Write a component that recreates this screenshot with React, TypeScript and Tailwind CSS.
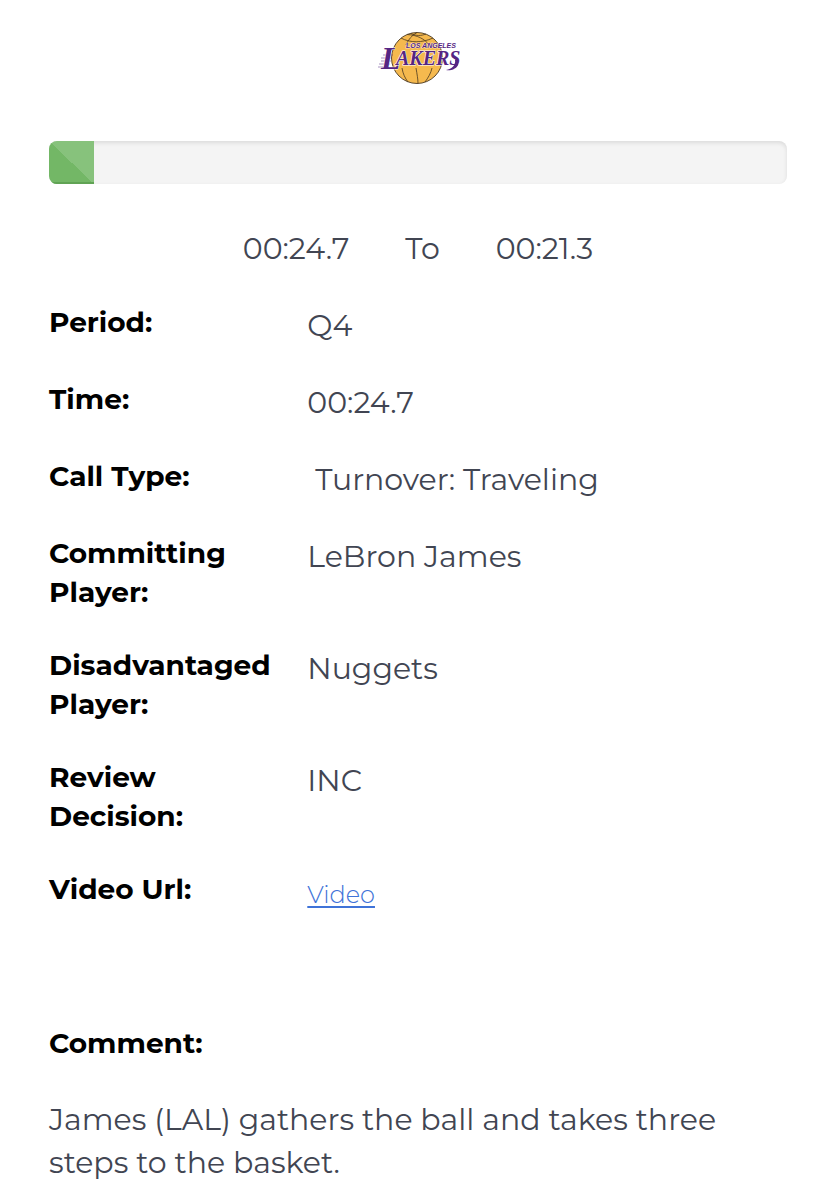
const details = [
  { label: "Period:", value: "Q4" },
  { label: "Time:", value: "00:24.7" },
  { label: "Call Type:", value: "Turnover: Traveling", indent: true },
  { label: "Committing Player:", value: "LeBron James" },
  { label: "Disadvantaged Player:", value: "Nuggets" },
  { label: "Review Decision:", value: "INC" },
];

function LakersLogo() {
  return (
    <svg viewBox="0 0 100 70" className="h-[70px] w-[100px]" role="img" aria-label="Los Angeles Lakers">
      <circle cx="49" cy="36" r="25.5" fill="#f5b94e" stroke="#4a3820" strokeWidth="0.9" />
      <g fill="none" stroke="#4a3820" strokeWidth="0.8">
        <path d="M33 16C42 21 54 21 65 16" />
        <path d="M49 10.500C44 13 40 18 38 23" />
        <path d="M39 12.500C49 13 57 17 61 23" />
        <path d="M43 11.500C48 14 53 14 58 12" />
        <path d="M34 46C35 52 37 56 40 60" />
        <path d="M48 46C49 52 50 57 50 61.500" />
        <path d="M64 46C63 51 60 56 57 60" />
      </g>
      <path
        d="M15 33h10M13 36h11M13 39h10M11 42h11M10 45h10"
        stroke="#552583"
        strokeWidth="0.7"
        opacity="0.7"
      />
      <g fill="#552583" stroke="#ffffff" paintOrder="stroke" fontStyle="italic" fontWeight="700">
        <text x="38" y="26" fontSize="7" strokeWidth="0.6" fontFamily="Liberation Sans, sans-serif">
          LOS ANGELES
        </text>
        <text x="13" y="47" fontSize="32" strokeWidth="1" fontFamily="Liberation Serif, serif">
          L
          <tspan x="28" y="43" fontSize="20">
            AKERS
          </tspan>
        </text>
      </g>
      <path d="M88 37C95 42 86 50 78 48C84 47 88 43 87 38" fill="#552583" />
    </svg>
  );
}

export default function App() {
  return (
    <main className="min-h-screen bg-white px-[49px] pt-[22px] pb-4 font-['Montserrat','Inter',sans-serif] text-3xl leading-[43px] font-normal text-[#414552]">
      <header className="flex justify-center">
        <LakersLogo />
      </header>

      <div
        role="progressbar"
        aria-label="Possession time"
        aria-valuenow={6}
        className="mt-[49px] h-[43px] overflow-hidden rounded-lg bg-[#f4f4f4] shadow-[inset_0_2px_4px_rgba(0,0,0,0.1)]"
      >
        <div className="h-full w-[6%] min-w-[45px] bg-linear-to-tr from-[#73b766] from-50% to-[#87c27c] to-50% shadow-[inset_0_-2px_0_#60a354]" />
      </div>

      <div className="mt-[43px] flex justify-center gap-14">
        <span>00:24.7</span>
        <span>To</span>
        <span>00:21.3</span>
      </div>

      <dl className="mt-[33px] flex flex-col gap-[34px]">
        {details.map((item) => (
          <div key={item.label} className="grid grid-cols-[35%_1fr]">
            <dt className="pr-8 text-[28px] leading-[39px] font-bold text-black">{item.label}</dt>
            <dd className={`pt-0.5 leading-[41px] ${item.indent ? "pl-2" : ""}`}>{item.value}</dd>
          </div>
        ))}
        <div className="grid grid-cols-[35%_1fr]">
          <dt className="pr-8 text-[28px] leading-[39px] font-bold text-black">Video Url:</dt>
          <dd className="pt-0.5 leading-[41px]">
            <a href="#video" className="text-2xl leading-[41px] font-light text-[#3f73d8] underline underline-offset-3">
              Video
            </a>
          </dd>
        </div>
      </dl>

      <section className="mt-[109px]">
        <h2 className="text-[28px] leading-[39px] font-bold text-black">Comment:</h2>
        <p className="mt-[35px]">James (LAL) gathers the ball and takes three steps to the basket.</p>
      </section>
    </main>
  );
}
